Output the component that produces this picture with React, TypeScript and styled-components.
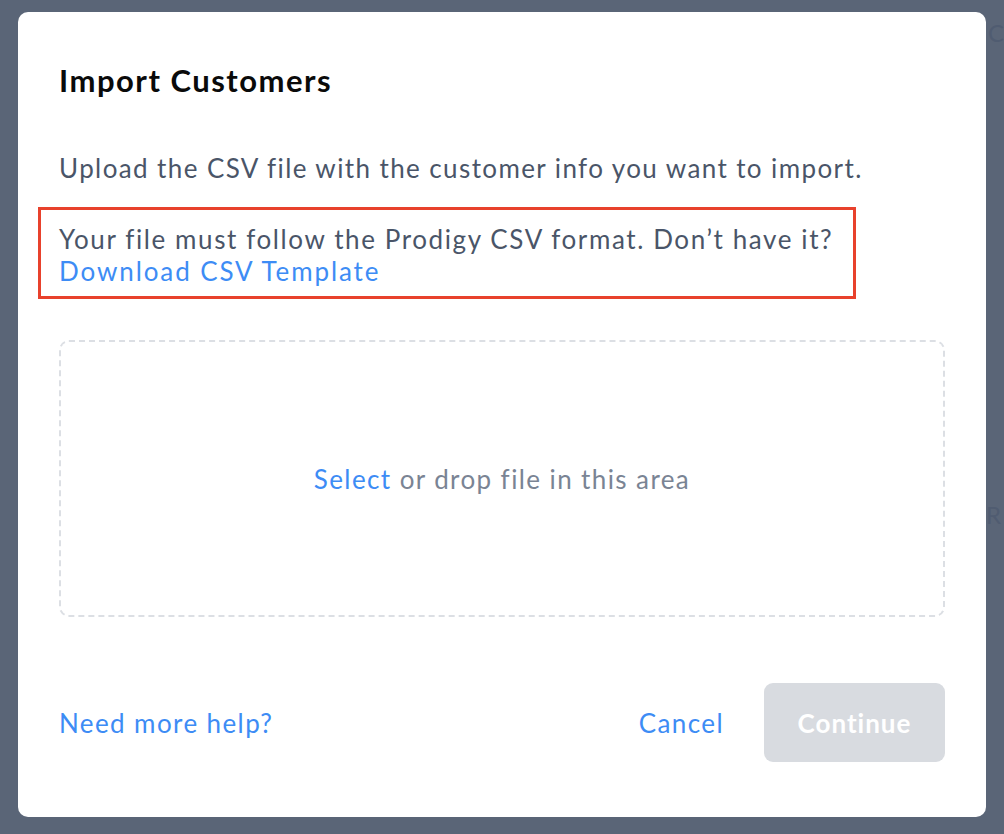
import styled, { createGlobalStyle } from "styled-components"

const GlobalStyle = createGlobalStyle`
  html, body {
    margin: 0;
    padding: 0;
    background: #5a6577;
    font-family: "Lato", "Noto Sans", sans-serif;
  }
  * { box-sizing: border-box; }
`

const Screen = styled.div`
  position: relative;
  width: 1004px;
  height: 834px;
  overflow: hidden;
  padding: 12px 18px 0 18px;
`

const Ghost = styled.span<{ $top: number; $left: number }>`
  position: absolute;
  left: ${p => p.$left}px;
  top: ${p => p.$top}px;
  font-size: 24px;
  color: #505c71;
  white-space: nowrap;
`

const ModalDiv = styled.div`
  position: relative;
  width: 968px;
  height: 805px;
  background: #ffffff;
  border-radius: 10px;
  padding: 50px 41px 0 41px;
  display: flex;
  flex-direction: column;
  letter-spacing: 1.4px;
`

const Title = styled.h3`
  margin: 0;
  font-size: 31px;
  line-height: 36px;
  font-weight: 700;
  letter-spacing: 1.5px;
  color: #0a0a0a;
`

const Body = styled.p`
  margin: 54px 0 0;
  font-size: 26px;
  line-height: 32px;
  color: #4a5568;
`

const Highlight = styled.div`
  align-self: flex-start;
  margin: 23px 0 0 -21px;
  padding: 13px 20px 9px 18px;
  border: 3px solid #e8412c;
  font-size: 26px;
  line-height: 32px;
  letter-spacing: 1.6px;
  color: #4a5568;
`

const Link = styled.a<{ $wide?: boolean }>`
  color: #3d8cf5;
  text-decoration: none;
  cursor: pointer;
  letter-spacing: ${p => (p.$wide ? "1.9px" : "inherit")};
`

const DropZone = styled.div`
  margin-top: 41px;
  height: 277px;
  border: 2px dashed #dcdfe4;
  border-radius: 10px;
  display: flex;
  align-items: center;
  justify-content: center;
  font-size: 26px;
  color: #7a8494;
`

const Footer = styled.div`
  margin-top: 66px;
  display: flex;
  align-items: center;
  justify-content: space-between;
`

const Actions = styled.div`
  display: flex;
  align-items: center;
  gap: 40px;
`

const TextButton = styled.button`
  appearance: none;
  border: none;
  background: transparent;
  padding: 0;
  font-family: inherit;
  font-size: 26px;
  letter-spacing: inherit;
  color: #3d8cf5;
  cursor: pointer;
`

const PrimaryButton = styled.button<{ $disabled?: boolean }>`
  appearance: none;
  border: none;
  width: 181px;
  height: 79px;
  border-radius: 9px;
  font-family: inherit;
  font-size: 26px;
  font-weight: 700;
  letter-spacing: 1px;
  color: #ffffff;
  background: ${p => (p.$disabled ? "#d8dbe0" : "#3d8cf5")};
  cursor: ${p => (p.$disabled ? "default" : "pointer")};
`

export default function App() {
  return (
    <>
      <GlobalStyle />
      <Screen>
        <Ghost $top={18} $left={988}>C</Ghost>
        <Ghost $top={500} $left={986}>R</Ghost>
        <ModalDiv>
          <Title>Import Customers</Title>
          <Body>Upload the CSV file with the customer info you want to import.</Body>
          <Highlight>
            Your file must follow the Prodigy CSV format. Don’t have it?
            <br />
            <Link $wide>Download CSV Template</Link>
          </Highlight>
          <DropZone>
            <Link>Select</Link>&nbsp;or drop file in this area
          </DropZone>
          <Footer>
            <TextButton>Need more help?</TextButton>
            <Actions>
              <TextButton>Cancel</TextButton>
              <PrimaryButton $disabled>Continue</PrimaryButton>
            </Actions>
          </Footer>
        </ModalDiv>
      </Screen>
    </>
  )
}
